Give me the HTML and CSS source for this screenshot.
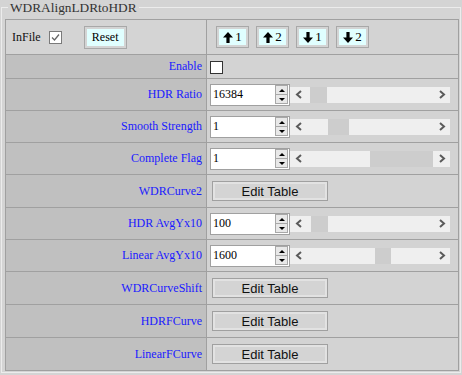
FILE: index.html
```html
<!DOCTYPE html>
<html lang="en">
<head>
    <meta charset="UTF-8">
    <title>WDRAlignLDRtoHDR</title>
    <link rel="stylesheet" href="styles.css">
</head>
<body>

    <fieldset class="panel">
        <legend>WDRAlignLDRtoHDR</legend>
        <table class="grid">
            <colgroup><col class="col-label"><col></colgroup>

            <tr class="row-head">
                <td class="head-cell">
                    <div class="head-left">
                        <span>InFile</span>
                        <span class="check checked">
                            <svg width="11" height="11" viewBox="0 0 11 11"><polyline points="2,5.5 4.5,8 9,2.5" fill="none" stroke="#666" stroke-width="1.3"/></svg>
                        </span>
                        <button class="btn-cyan btn-reset">Reset</button>
                    </div>
                </td>
                <td class="value head-cell">
                    <div class="head-right">
                        <button class="btn-cyan btn-move"><svg class="arrow" width="10" height="11" viewBox="0 0 10 11"><polygon points="5,0 10,5.5 6.6,5.5 6.6,11 3.4,11 3.4,5.5 0,5.5"/></svg>1</button>
                        <button class="btn-cyan btn-move"><svg class="arrow" width="10" height="11" viewBox="0 0 10 11"><polygon points="5,0 10,5.5 6.6,5.5 6.6,11 3.4,11 3.4,5.5 0,5.5"/></svg>2</button>
                        <button class="btn-cyan btn-move"><svg class="arrow" width="10" height="11" viewBox="0 0 10 11"><polygon points="5,11 10,5.5 6.6,5.5 6.6,0 3.4,0 3.4,5.5 0,5.5"/></svg>1</button>
                        <button class="btn-cyan btn-move"><svg class="arrow" width="10" height="11" viewBox="0 0 10 11"><polygon points="5,11 10,5.5 6.6,5.5 6.6,0 3.4,0 3.4,5.5 0,5.5"/></svg>2</button>
                    </div>
                </td>
            </tr>

            <tr class="row-check">
                <td class="label">Enable</td>
                <td class="value"><span class="check"></span></td>
            </tr>

            <tr class="row-input">
                <td class="label">HDR Ratio</td>
                <td class="value">
                    <div class="field">
                        <div class="numbox"><span class="num">16384</span><span class="spin"><span class="spin-btn"><i class="tri-up"></i></span><span class="spin-btn"><i class="tri-down"></i></span></span></div>
                        <div class="slider">
                            <span class="sl-arrow"><svg width="8" height="9" viewBox="0 0 8 9"><polyline points="6,1 2,4.5 6,8" fill="none" stroke="#5a5a5a" stroke-width="2"/></svg></span>
                            <div class="trough"><div class="thumb" style="margin-left:3px;width:17px"></div></div>
                            <span class="sl-arrow"><svg width="8" height="9" viewBox="0 0 8 9"><polyline points="2,1 6,4.5 2,8" fill="none" stroke="#5a5a5a" stroke-width="2"/></svg></span>
                        </div>
                    </div>
                </td>
            </tr>

            <tr class="row-input">
                <td class="label">Smooth Strength</td>
                <td class="value">
                    <div class="field">
                        <div class="numbox"><span class="num">1</span><span class="spin"><span class="spin-btn"><i class="tri-up"></i></span><span class="spin-btn"><i class="tri-down"></i></span></span></div>
                        <div class="slider">
                            <span class="sl-arrow"><svg width="8" height="9" viewBox="0 0 8 9"><polyline points="6,1 2,4.5 6,8" fill="none" stroke="#5a5a5a" stroke-width="2"/></svg></span>
                            <div class="trough"><div class="thumb" style="margin-left:21px;width:21px"></div></div>
                            <span class="sl-arrow"><svg width="8" height="9" viewBox="0 0 8 9"><polyline points="2,1 6,4.5 2,8" fill="none" stroke="#5a5a5a" stroke-width="2"/></svg></span>
                        </div>
                    </div>
                </td>
            </tr>

            <tr class="row-input">
                <td class="label">Complete Flag</td>
                <td class="value">
                    <div class="field">
                        <div class="numbox"><span class="num">1</span><span class="spin"><span class="spin-btn"><i class="tri-up"></i></span><span class="spin-btn"><i class="tri-down"></i></span></span></div>
                        <div class="slider">
                            <span class="sl-arrow"><svg width="8" height="9" viewBox="0 0 8 9"><polyline points="6,1 2,4.5 6,8" fill="none" stroke="#5a5a5a" stroke-width="2"/></svg></span>
                            <div class="trough"><div class="thumb" style="margin-left:63px;width:63px"></div></div>
                            <span class="sl-arrow"><svg width="8" height="9" viewBox="0 0 8 9"><polyline points="2,1 6,4.5 2,8" fill="none" stroke="#5a5a5a" stroke-width="2"/></svg></span>
                        </div>
                    </div>
                </td>
            </tr>

            <tr class="row-edit">
                <td class="label">WDRCurve2</td>
                <td class="value"><button class="btn-edit">Edit Table</button></td>
            </tr>

            <tr class="row-input">
                <td class="label">HDR AvgYx10</td>
                <td class="value">
                    <div class="field">
                        <div class="numbox"><span class="num">100</span><span class="spin"><span class="spin-btn"><i class="tri-up"></i></span><span class="spin-btn"><i class="tri-down"></i></span></span></div>
                        <div class="slider">
                            <span class="sl-arrow"><svg width="8" height="9" viewBox="0 0 8 9"><polyline points="6,1 2,4.5 6,8" fill="none" stroke="#5a5a5a" stroke-width="2"/></svg></span>
                            <div class="trough"><div class="thumb" style="margin-left:4px;width:17px"></div></div>
                            <span class="sl-arrow"><svg width="8" height="9" viewBox="0 0 8 9"><polyline points="2,1 6,4.5 2,8" fill="none" stroke="#5a5a5a" stroke-width="2"/></svg></span>
                        </div>
                    </div>
                </td>
            </tr>

            <tr class="row-input">
                <td class="label">Linear AvgYx10</td>
                <td class="value">
                    <div class="field">
                        <div class="numbox"><span class="num">1600</span><span class="spin"><span class="spin-btn"><i class="tri-up"></i></span><span class="spin-btn"><i class="tri-down"></i></span></span></div>
                        <div class="slider">
                            <span class="sl-arrow"><svg width="8" height="9" viewBox="0 0 8 9"><polyline points="6,1 2,4.5 6,8" fill="none" stroke="#5a5a5a" stroke-width="2"/></svg></span>
                            <div class="trough"><div class="thumb" style="margin-left:68px;width:16px"></div></div>
                            <span class="sl-arrow"><svg width="8" height="9" viewBox="0 0 8 9"><polyline points="2,1 6,4.5 2,8" fill="none" stroke="#5a5a5a" stroke-width="2"/></svg></span>
                        </div>
                    </div>
                </td>
            </tr>

            <tr class="row-edit">
                <td class="label">WDRCurveShift</td>
                <td class="value"><button class="btn-edit">Edit Table</button></td>
            </tr>

            <tr class="row-edit">
                <td class="label">HDRFCurve</td>
                <td class="value"><button class="btn-edit">Edit Table</button></td>
            </tr>

            <tr class="row-edit">
                <td class="label">LinearFCurve</td>
                <td class="value"><button class="btn-edit">Edit Table</button></td>
            </tr>
        </table>
    </fieldset>

</body>
</html>
```

FILE: styles.css
```css
body {
    margin: 0;
    background: #d4d4d4;
    font-family: "Liberation Serif", "Times New Roman", serif;
    color: #000;
}
.panel {
    margin: 0 1px;
    padding: 4px 1px 1px 3px;
    border: 1px solid #ececec;
    min-width: 0;
}
.panel legend {
    margin-left: 3px;
    padding: 0 2px;
    font-size: 13.33px;
    line-height: 15px;
    color: #333;
}
.grid {
    width: 100%;
    table-layout: fixed;
    border-collapse: collapse;
    border: 1px solid #9a9a9a;
}
.col-label {
    width: 201px;
}
.grid td {
    border: 1px solid #a0a0a0;
    padding: 0;
    vertical-align: middle;
}
.row-head { height: 35px; }
.row-check { height: 24px; }
.row-input { height: 32px; }
.row-edit { height: 33px; }

.label {
    background: #c0c0c0;
    text-align: right;
    padding-right: 4px !important;
    font-size: 12px;
    color: #1a1aff;
}
.value {
    background: #d3d3d3;
    padding-left: 3px !important;
}

.head-left {
    display: flex;
    align-items: center;
    padding-left: 6px;
    font-size: 12px;
    color: #111;
}
.head-right {
    display: flex;
    align-items: center;
    gap: 7px;
    margin-left: 6px;
}

.check {
    display: inline-flex;
    align-items: center;
    justify-content: center;
    width: 13px;
    height: 13px;
    box-sizing: border-box;
    border: 1px solid #333;
    background: #fff;
    vertical-align: middle;
}
.head-left .check {
    margin-left: 8px;
    border-color: #7a7a7a;
}

.btn-cyan {
    font-family: "Liberation Serif", "Times New Roman", serif;
    font-size: 12px;
    color: #000;
    background: #e0ffff;
    border: 1px solid #a8a8a8;
    box-shadow: inset 0 0 0 2px #d4d4d4;
    padding: 0;
    cursor: pointer;
}
.btn-reset {
    margin-left: 22px;
    width: 43px;
    height: 23px;
}
.btn-move {
    display: flex;
    align-items: center;
    justify-content: center;
    gap: 2px;
    width: 33px;
    height: 22px;
    font-size: 13px;
}
.arrow {
    fill: #000;
}

.field {
    display: flex;
    align-items: center;
}
.numbox {
    display: flex;
    align-items: center;
    width: 80px;
    height: 22px;
    box-sizing: border-box;
    border: 1px solid #a0a0a0;
    background: #fff;
    padding: 0 1px 0 2px;
}
.num {
    flex: 1;
    font-size: 12px;
}
.spin {
    display: flex;
    flex-direction: column;
}
.spin-btn {
    display: flex;
    align-items: center;
    justify-content: center;
    width: 13px;
    height: 10px;
    box-sizing: border-box;
    border: 1px solid #a8a8a8;
    background: #e8e8e8;
}
.spin-btn + .spin-btn {
    border-top: none;
    height: 9px;
}
.tri-up, .tri-down {
    width: 0;
    height: 0;
    border-left: 3px solid transparent;
    border-right: 3px solid transparent;
}
.tri-up { border-bottom: 3px solid #000; }
.tri-down { border-top: 3px solid #000; }

.slider {
    display: flex;
    width: 160px;
    height: 16px;
    background: #efefef;
}
.sl-arrow {
    display: flex;
    align-items: center;
    justify-content: center;
    width: 17px;
}
.trough {
    flex: 1;
    display: flex;
}
.thumb {
    background: #cdcdcd;
}

.btn-edit {
    margin-left: 2px;
    width: 116px;
    height: 20px;
    padding: 0;
    border: 1px solid #a0a0a0;
    background: #d4d4d4;
    box-shadow: inset 0 0 0 2px #e2e2e2;
    font-family: "Liberation Sans", Arial, sans-serif;
    font-size: 13px;
    color: #111;
    cursor: pointer;
}
```
